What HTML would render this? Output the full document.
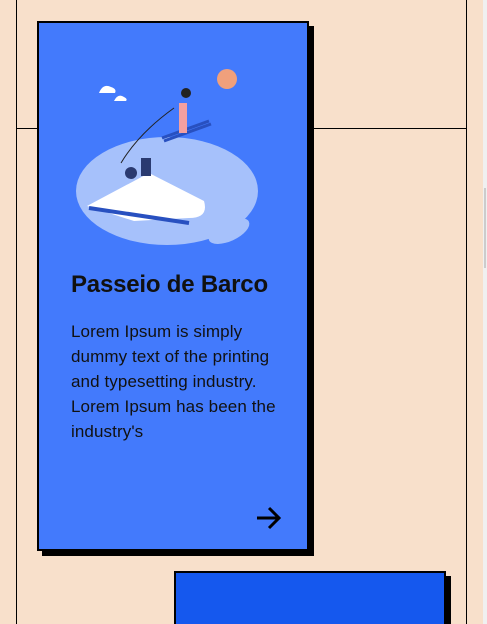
<!DOCTYPE html><html><head><style>
html,body{margin:0;width:487px;height:624px;overflow:hidden}
body{background:#f8e0cb;position:relative;font-family:"Liberation Sans",sans-serif}
.l{position:absolute;background:#000}
.card{position:absolute;box-sizing:border-box;border:2px solid #000;box-shadow:5px 5px 0 #000}
</style></head><body>
<div class="l" style="left:16px;top:0;width:1px;height:624px"></div>
<div class="l" style="left:466px;top:0;width:1px;height:624px"></div>
<div class="l" style="left:16px;top:128px;width:451px;height:1px"></div>
<div style="position:absolute;left:483px;top:0;width:4px;height:624px;background:#f0f0f0"></div>
<div style="position:absolute;left:484px;top:188px;width:2px;height:80px;background:#ccc"></div>
<div class="card" style="left:37px;top:21px;width:272px;height:530px;background:#437afc">
<svg width="268" height="230" style="position:absolute;left:0;top:0">
<ellipse cx="128" cy="168" rx="91" ry="54" fill="#a6c1fb"/>
<ellipse cx="190" cy="208" rx="22" ry="10" fill="#a6c1fb" transform="rotate(-25 190 208)"/>
<circle cx="188" cy="56" r="10" fill="#f0a07c"/>
<path d="M60 70q4-10 12-6q6 2 4 6z M75 78q4-8 10-4q4 2 2 4z" fill="#fff"/>
<path d="M48 183 L110 150 L165 178 Q170 195 150 195 L95 198 Z" fill="#fff"/>
<path d="M50 185 L150 200" stroke="#2850c0" stroke-width="4"/>
<circle cx="92" cy="150" r="6" fill="#2a3a70"/>
<rect x="102" y="135" width="10" height="18" fill="#2a3a70"/>
<path d="M123 115 L170 98 M125 118 L172 101" stroke="#2850c0" stroke-width="3"/>
<rect x="140" y="80" width="8" height="30" fill="#f4a0a0"/>
<circle cx="147" cy="70" r="5" fill="#222"/>
<path d="M82 140 Q100 110 135 85" stroke="#222" fill="none"/>
</svg>
<div style="position:absolute;left:32px;top:248px;font-size:24px;font-weight:bold;color:#111;letter-spacing:-0.2px">Passeio de Barco</div>
<div style="position:absolute;left:32px;top:296px;width:218px;font-size:17px;line-height:25px;color:#111;letter-spacing:0.1px">Lorem Ipsum is simply dummy text of the printing and typesetting industry. Lorem Ipsum has been the industry's</div>
<svg width="30" height="26" style="position:absolute;left:215px;top:482px"><path d="M3 13H25M15 3L25 13L15 23" stroke="#000" stroke-width="3" fill="none"/></svg>
</div>
<div class="card" style="left:174px;top:571px;width:272px;height:80px;background:#1558ee"></div>
</body></html>
